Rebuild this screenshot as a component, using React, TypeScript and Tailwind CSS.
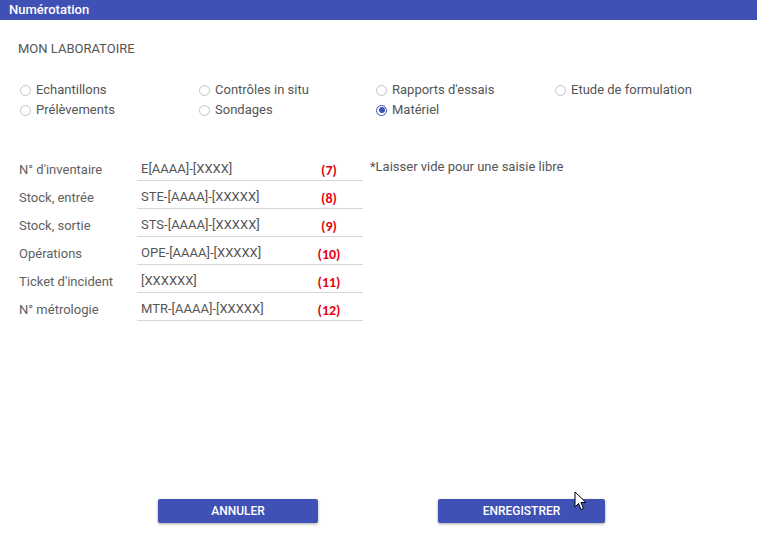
import { useState } from "react";

const TYPES = [
  ["Echantillons", "Contrôles in situ", "Rapports d'essais", "Etude de formulation"],
  ["Prélèvements", "Sondages", "Matériel"],
];

const FIELDS = [
  { label: "N° d'inventaire", value: "E[AAAA]-[XXXX]", num: "(7)" },
  { label: "Stock, entrée", value: "STE-[AAAA]-[XXXXX]", num: "(8)" },
  { label: "Stock, sortie", value: "STS-[AAAA]-[XXXXX]", num: "(9)" },
  { label: "Opérations", value: "OPE-[AAAA]-[XXXXX]", num: "(10)" },
  { label: "Ticket d'incident", value: "[XXXXXX]", num: "(11)" },
  { label: "N° métrologie", value: "MTR-[AAAA]-[XXXXX]", num: "(12)" },
];

function Radio({ label, checked, onClick }: { label: string; checked: boolean; onClick: () => void }) {
  return (
    <button onClick={onClick} className="flex items-center gap-[5px] h-[20px] text-left">
      <span
        className={`w-[11px] h-[11px] rounded-full border flex items-center justify-center ${
          checked ? "border-[#3f51b5]" : "border-[#c4c4c4]"
        }`}
      >
        {checked && <span className="w-[6px] h-[6px] rounded-full bg-[#3f51b5]" />}
      </span>
      <span className="text-[13px] text-[#555]">{label}</span>
    </button>
  );
}

export default function App() {
  const [active, setActive] = useState("Matériel");

  return (
    <div className="relative h-[557px] flex flex-col bg-white" style={{ fontFamily: "Roboto, 'Noto Sans', sans-serif" }}>
      <div className="h-[20px] bg-[#3f51b5] flex items-center pl-[9px]">
        <span className="text-[13px] font-medium text-white">Numérotation</span>
      </div>

      <div className="pl-[18px] mt-[21px] text-[13px] leading-[16px] text-[#555]">MON LABORATOIRE</div>

      {/* Type tabs */}
      <div className="mt-[23px] pl-[20px] flex flex-col">
        {TYPES.map((row, i) => (
          <div key={i} className="grid grid-cols-[179px_177px_179px_179px]">
            {row.map(t => (
              <Radio key={t} label={t} checked={active === t} onClick={() => setActive(t)} />
            ))}
          </div>
        ))}
      </div>

      <div className="mt-[33px] pl-[19px] flex flex-col">
        {FIELDS.map((f, i) => (
          <div key={f.label} className="flex items-end h-[28px]">
            <div className="w-[118px] pb-[3px] text-[13px] leading-[16px] text-[#616161]">{f.label}</div>
            <div className="w-[226px] h-[28px] flex items-end border-b border-[#d6d6d6] pb-[3px]">
              <span className="pl-[4px] flex-1 text-[13px] leading-[16px] text-[#555]">{f.value}</span>
              <span
                className="w-[68px] text-center text-[14px] leading-[16px] font-bold text-[#e8000b] translate-y-[2px]"
                style={{ fontFamily: "Carlito, 'Open Sans', sans-serif" }}
              >
                {f.num}
              </span>
            </div>
            {i === 0 && (
              <div className="pl-[7px] pb-[6px] text-[13px] leading-[16px] text-[#555]">
                *Laisser vide pour une saisie libre
              </div>
            )}
          </div>
        ))}
      </div>

      <div className="mt-auto mb-[34px] pl-[158px] flex gap-[120px]">
        <button className="w-[160px] h-[24px] rounded-[2px] bg-[#3f51b5] text-white text-[12px] font-medium shadow-[0_1px_3px_rgba(0,0,0,0.35)]">
          ANNULER
        </button>
        <button className="w-[167px] h-[24px] rounded-[2px] bg-[#3f51b5] text-white text-[12px] font-medium shadow-[0_1px_3px_rgba(0,0,0,0.35)]">
          ENREGISTRER
        </button>
      </div>

      {/* mouse pointer */}
      <svg className="absolute left-[574px] top-[491px]" width="13" height="20" viewBox="0 0 13 20">
        <path d="M1 1 L1 16 L4.5 12.5 L7 18.5 L9.5 17.5 L7 11.5 L12 11.5 Z" fill="white" stroke="black" strokeWidth="1" strokeLinejoin="round" />
      </svg>
    </div>
  );
}
